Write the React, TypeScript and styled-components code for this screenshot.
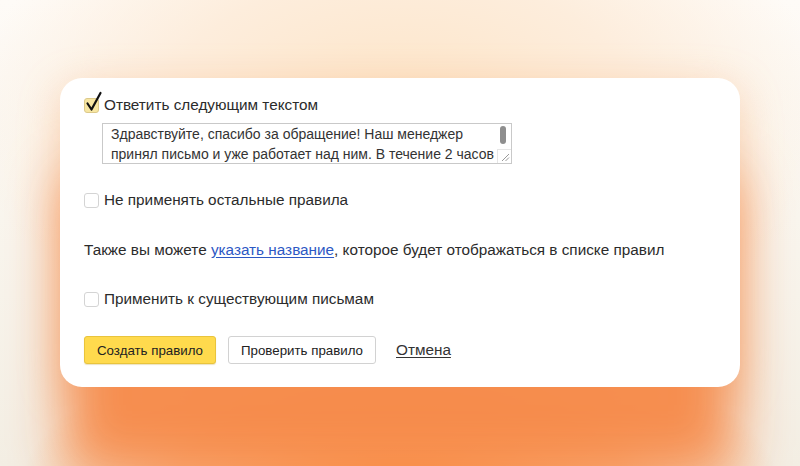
import React from "react";
import styled, { createGlobalStyle } from "styled-components";

const GlobalStyle = createGlobalStyle`
  html, body {
    margin: 0;
    padding: 0;
    width: 100%;
    height: 100%;
    overflow: hidden;
  }
  body {
    font-family: "Liberation Sans", Arial, sans-serif;
    background:
      radial-gradient(ellipse 380px 160px at 50% 105%, #fe9040 0%, rgba(253, 143, 66, 0.6) 60%, rgba(253, 143, 66, 0) 100%),
      radial-gradient(ellipse 430px 260px at 50% 25%, #fde4c6 0%, #fdeddc 55%, rgba(253, 237, 220, 0) 100%),
      linear-gradient(180deg, #fefbf7 0%, #f3eee4 100%);
  }
`;

const Stage = styled.div`
  width: 800px;
  height: 466px;
  display: flex;
  justify-content: center;
  padding-top: 78px;
  box-sizing: border-box;
`;

const Card = styled.div`
  width: 680px;
  height: 309px;
  box-sizing: border-box;
  background: #fff;
  border-radius: 22px;
  padding: 18px 24px 0 24px;
  display: flex;
  flex-direction: column;
  color: #2b2b2b;
  font-size: 15.3px;
  box-shadow:
    0 90px 55px -5px rgba(245, 138, 74, 0.95),
    0 10px 40px rgba(246, 160, 100, 0.4);
`;

const CheckRow = styled.label<{ $gap: number }>`
  display: flex;
  align-items: center;
  gap: 5px;
  height: 18px;
  margin-top: ${(p) => p.$gap}px;
  line-height: 18px;
`;

const Box = styled.span<{ $checked?: boolean }>`
  position: relative;
  width: 13px;
  height: 13px;
  flex: none;
  border-radius: 3px;
  border: 1px solid ${(p) => (p.$checked ? "#dcc98a" : "#d4d4d4")};
  background: ${(p) => (p.$checked ? "#f7e6a2" : "#fff")};
`;

const Tick = styled.svg`
  position: absolute;
  left: 0px;
  top: -7px;
  width: 18px;
  height: 20px;
  overflow: visible;
`;

const TextArea = styled.div`
  position: relative;
  margin: 9px 0 0 18px;
  width: 410px;
  height: 41px;
  box-sizing: border-box;
  border: 1px solid #c9c9c9;
  padding: 0 12px 0 8px;
  font-size: 14px;
  line-height: 20px;
  color: #333;
  white-space: pre;
  overflow: hidden;
`;

const Thumb = styled.span`
  position: absolute;
  right: 5px;
  top: 2px;
  width: 6px;
  height: 18px;
  border-radius: 3px;
  background: #8e8e8e;
`;

const Grip = styled.svg`
  position: absolute;
  right: 0;
  bottom: 0;
  width: 13px;
  height: 13px;
  background: #fff;
  border-left: 1px solid #e6e6e6;
  border-top: 1px solid #e6e6e6;
`;

const Note = styled.p`
  margin: 32px 0 0 0;
  line-height: 18px;
`;

const Link = styled.a`
  color: #2d58c4;
  text-decoration: underline;
  text-underline-offset: 2px;
`;

const Actions = styled.div`
  display: flex;
  align-items: center;
  gap: 12px;
  margin-top: 28px;
`;

const Button = styled.button<{ $primary?: boolean }>`
  height: 28px;
  padding: 0 12px;
  border-radius: 3px;
  font-family: "Liberation Sans", Arial, sans-serif;
  font-size: 13.3px;
  color: #222;
  border: 1px solid ${(p) => (p.$primary ? "#e9c43c" : "#d2d2d2")};
  background: ${(p) => (p.$primary ? "#ffda4d" : "#fff")};
  box-shadow: ${(p) => (p.$primary ? "0 1px 1px rgba(180,140,0,0.25)" : "none")};
`;

const Cancel = styled.a`
  margin-left: 8px;
  color: #333;
  text-decoration: underline;
  text-underline-offset: 2px;
`;

const Check = ({ checked }: { checked?: boolean }) => (
  <Box $checked={checked}>
    {checked && (
      <Tick viewBox="0 0 18 20">
        <path d="M2.5 11.5 L6.5 17.5 L15.5 1" fill="none" stroke="#111" strokeWidth="2.2" strokeLinecap="round" strokeLinejoin="round" />
      </Tick>
    )}
  </Box>
);

export default function App() {
  return (
    <>
      <GlobalStyle />
      <Stage>
        <Card>
          <CheckRow $gap={0}>
            <Check checked />
            Ответить следующим текстом
          </CheckRow>
          <TextArea>
            {"Здравствуйте, спасибо за обращение! Наш менеджер\nпринял письмо и уже работает над ним. В течение 2 часов"}
            <Thumb />
            <Grip viewBox="0 0 13 13">
              <path d="M4 11 L11 4 M7.5 11 L11 7.5" stroke="#9a9a9a" strokeWidth="1" />
            </Grip>
          </TextArea>
          <CheckRow $gap={27}>
            <Check />
            Не применять остальные правила
          </CheckRow>
          <Note>
            Также вы можете <Link>указать название</Link>, которое будет отображаться в списке правил
          </Note>
          <CheckRow $gap={31}>
            <Check />
            Применить к существующим письмам
          </CheckRow>
          <Actions>
            <Button $primary>Создать правило</Button>
            <Button>Проверить правило</Button>
            <Cancel>Отмена</Cancel>
          </Actions>
        </Card>
      </Stage>
    </>
  );
}
